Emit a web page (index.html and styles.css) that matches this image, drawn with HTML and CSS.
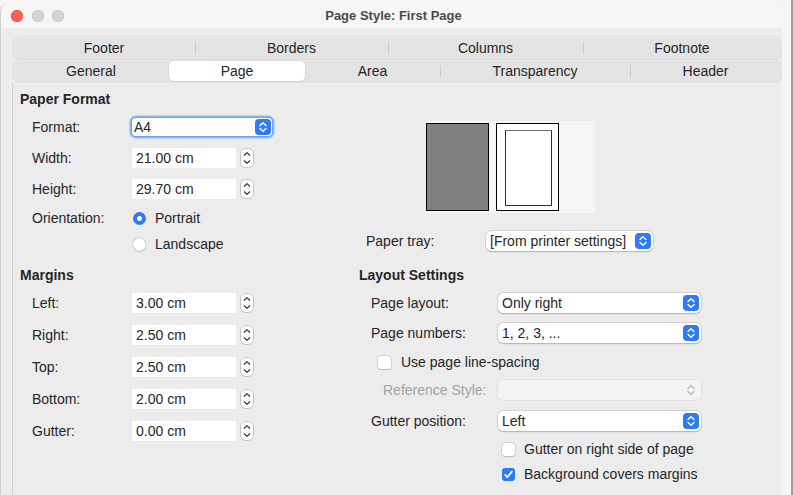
FILE: index.html
```html
<!DOCTYPE html>
<html>
<head>
<meta charset="utf-8">
<title>Page Style: First Page</title>
<link rel="stylesheet" href="styles.css">
</head>
<body>
<div class="window">
  <div class="titlebar">
    <div class="lights"><span class="light close"></span><span class="light"></span><span class="light"></span></div>
    <div class="title">Page Style: First Page</div>
    <div></div>
  </div>

  <div class="tabs">
    <div class="tabrow">
      <div class="tab w182">Footer</div>
      <div class="tab sep w193">Borders</div>
      <div class="tab sep w195">Columns</div>
      <div class="tab sep w198">Footnote</div>
    </div>
    <div class="tabrow">
      <div class="tab w156">General</div>
      <div class="tab active w136">Page</div>
      <div class="tab w135">Area</div>
      <div class="tab sep w190">Transparency</div>
      <div class="tab sep w151">Header</div>
    </div>
  </div>

  <div class="panel">
    <div class="col left">
      <div class="row head m6">Paper Format</div>
      <div class="row field h22 m7">
        <span class="lbl">Format:</span>
        <div class="select focus w140"><span>A4</span>
          <svg class="updown" width="16" height="16" viewBox="0 0 16 16"><rect x="0" y="0" width="16" height="16" rx="4" fill="#2d7cf6"/><path d="M5 6.5 L8 3.8 L11 6.5 M5 9.5 L8 12.2 L11 9.5" fill="none" stroke="#fff" stroke-width="1.5" stroke-linecap="round" stroke-linejoin="round"/></svg>
        </div>
      </div>
      <div class="row field m10"><span class="lbl">Width:</span><span class="num">21.00 cm</span>
        <svg class="spinner" width="14" height="20" viewBox="0 0 14 20"><rect x="0.5" y="0.5" width="13" height="19" rx="5" fill="#fff" stroke="#c4c4c4"/><path d="M4.3 7.2 L7 4.6 L9.7 7.2" fill="none" stroke="#333" stroke-width="1.2" stroke-linecap="round" stroke-linejoin="round"/><path d="M4.3 12.8 L7 15.4 L9.7 12.8" fill="none" stroke="#333" stroke-width="1.2" stroke-linecap="round" stroke-linejoin="round"/></svg>
      </div>
      <div class="row field m11"><span class="lbl">Height:</span><span class="num">29.70 cm</span>
        <svg class="spinner" width="14" height="20" viewBox="0 0 14 20"><rect x="0.5" y="0.5" width="13" height="19" rx="5" fill="#fff" stroke="#c4c4c4"/><path d="M4.3 7.2 L7 4.6 L9.7 7.2" fill="none" stroke="#333" stroke-width="1.2" stroke-linecap="round" stroke-linejoin="round"/><path d="M4.3 12.8 L7 15.4 L9.7 12.8" fill="none" stroke="#333" stroke-width="1.2" stroke-linecap="round" stroke-linejoin="round"/></svg>
      </div>
      <div class="row field m9"><span class="lbl">Orientation:</span><span class="radio on"></span><span class="opt">Portrait</span></div>
      <div class="row field m6"><span class="lbl"></span><span class="radio"></span><span class="opt">Landscape</span></div>

      <div class="row head m11">Margins</div>
      <div class="row field m8"><span class="lbl">Left:</span><span class="num">3.00 cm</span>
        <svg class="spinner" width="14" height="20" viewBox="0 0 14 20"><rect x="0.5" y="0.5" width="13" height="19" rx="5" fill="#fff" stroke="#c4c4c4"/><path d="M4.3 7.2 L7 4.6 L9.7 7.2" fill="none" stroke="#333" stroke-width="1.2" stroke-linecap="round" stroke-linejoin="round"/><path d="M4.3 12.8 L7 15.4 L9.7 12.8" fill="none" stroke="#333" stroke-width="1.2" stroke-linecap="round" stroke-linejoin="round"/></svg>
      </div>
      <div class="row field m12"><span class="lbl">Right:</span><span class="num">2.50 cm</span>
        <svg class="spinner" width="14" height="20" viewBox="0 0 14 20"><rect x="0.5" y="0.5" width="13" height="19" rx="5" fill="#fff" stroke="#c4c4c4"/><path d="M4.3 7.2 L7 4.6 L9.7 7.2" fill="none" stroke="#333" stroke-width="1.2" stroke-linecap="round" stroke-linejoin="round"/><path d="M4.3 12.8 L7 15.4 L9.7 12.8" fill="none" stroke="#333" stroke-width="1.2" stroke-linecap="round" stroke-linejoin="round"/></svg>
      </div>
      <div class="row field m12"><span class="lbl">Top:</span><span class="num">2.50 cm</span>
        <svg class="spinner" width="14" height="20" viewBox="0 0 14 20"><rect x="0.5" y="0.5" width="13" height="19" rx="5" fill="#fff" stroke="#c4c4c4"/><path d="M4.3 7.2 L7 4.6 L9.7 7.2" fill="none" stroke="#333" stroke-width="1.2" stroke-linecap="round" stroke-linejoin="round"/><path d="M4.3 12.8 L7 15.4 L9.7 12.8" fill="none" stroke="#333" stroke-width="1.2" stroke-linecap="round" stroke-linejoin="round"/></svg>
      </div>
      <div class="row field m12"><span class="lbl">Bottom:</span><span class="num">2.00 cm</span>
        <svg class="spinner" width="14" height="20" viewBox="0 0 14 20"><rect x="0.5" y="0.5" width="13" height="19" rx="5" fill="#fff" stroke="#c4c4c4"/><path d="M4.3 7.2 L7 4.6 L9.7 7.2" fill="none" stroke="#333" stroke-width="1.2" stroke-linecap="round" stroke-linejoin="round"/><path d="M4.3 12.8 L7 15.4 L9.7 12.8" fill="none" stroke="#333" stroke-width="1.2" stroke-linecap="round" stroke-linejoin="round"/></svg>
      </div>
      <div class="row field m12"><span class="lbl">Gutter:</span><span class="num">0.00 cm</span>
        <svg class="spinner" width="14" height="20" viewBox="0 0 14 20"><rect x="0.5" y="0.5" width="13" height="19" rx="5" fill="#fff" stroke="#c4c4c4"/><path d="M4.3 7.2 L7 4.6 L9.7 7.2" fill="none" stroke="#333" stroke-width="1.2" stroke-linecap="round" stroke-linejoin="round"/><path d="M4.3 12.8 L7 15.4 L9.7 12.8" fill="none" stroke="#333" stroke-width="1.2" stroke-linecap="round" stroke-linejoin="round"/></svg>
      </div>
    </div>

    <div class="col right">
      <div class="preview">
        <div class="sheet dark"></div>
        <div class="sheet page"><div class="inner"></div></div>
      </div>
      <div class="row h22 m17 p16"><span class="lbl l120">Paper tray:</span>
        <div class="select w167"><span>[From printer settings]</span>
          <svg class="updown" width="16" height="16" viewBox="0 0 16 16"><rect x="0" y="0" width="16" height="16" rx="4" fill="#2d7cf6"/><path d="M5 6.5 L8 3.8 L11 6.5 M5 9.5 L8 12.2 L11 9.5" fill="none" stroke="#fff" stroke-width="1.5" stroke-linecap="round" stroke-linejoin="round"/></svg>
        </div>
      </div>
      <div class="row head m13 p9">Layout Settings</div>
      <div class="row m8 p21"><span class="lbl l127">Page layout:</span>
        <div class="select w203"><span>Only right</span>
          <svg class="updown" width="16" height="16" viewBox="0 0 16 16"><rect x="0" y="0" width="16" height="16" rx="4" fill="#2d7cf6"/><path d="M5 6.5 L8 3.8 L11 6.5 M5 9.5 L8 12.2 L11 9.5" fill="none" stroke="#fff" stroke-width="1.5" stroke-linecap="round" stroke-linejoin="round"/></svg>
        </div>
      </div>
      <div class="row m10 p21"><span class="lbl l127">Page numbers:</span>
        <div class="select w203"><span>1, 2, 3, ...</span>
          <svg class="updown" width="16" height="16" viewBox="0 0 16 16"><rect x="0" y="0" width="16" height="16" rx="4" fill="#2d7cf6"/><path d="M5 6.5 L8 3.8 L11 6.5 M5 9.5 L8 12.2 L11 9.5" fill="none" stroke="#fff" stroke-width="1.5" stroke-linecap="round" stroke-linejoin="round"/></svg>
        </div>
      </div>
      <div class="row m9 p28"><span class="check"></span><span class="opt2">Use page line-spacing</span></div>
      <div class="row m8 p33"><span class="lbl l115 disabled">Reference Style:</span>
        <div class="select off w203"><span></span>
          <svg class="updown" width="16" height="16" viewBox="0 0 16 16"><path d="M5 6.5 L8 3.8 L11 6.5 M5 9.5 L8 12.2 L11 9.5" fill="none" stroke="#b4b4b4" stroke-width="1.3" stroke-linecap="round" stroke-linejoin="round"/></svg>
        </div>
      </div>
      <div class="row m11 p21"><span class="lbl l127">Gutter position:</span>
        <div class="select w203"><span>Left</span>
          <svg class="updown" width="16" height="16" viewBox="0 0 16 16"><rect x="0" y="0" width="16" height="16" rx="4" fill="#2d7cf6"/><path d="M5 6.5 L8 3.8 L11 6.5 M5 9.5 L8 12.2 L11 9.5" fill="none" stroke="#fff" stroke-width="1.5" stroke-linecap="round" stroke-linejoin="round"/></svg>
        </div>
      </div>
      <div class="row m8 p152"><span class="check"></span><span class="opt3">Gutter on right side of page</span></div>
      <div class="row m5 p152"><span class="check on"><svg width="13" height="13" viewBox="0 0 13 13"><path d="M3.2 6.8 L5.4 9.2 L9.8 3.6" fill="none" stroke="#fff" stroke-width="1.8" stroke-linecap="round" stroke-linejoin="round"/></svg></span><span class="opt3">Background covers margins</span></div>
    </div>
  </div>
</div>
</body>
</html>
```

FILE: styles.css
```css
html, body {
  margin: 0;
  padding: 0;
  width: 793px;
  height: 495px;
  overflow: hidden;
}
body {
  background: linear-gradient(to right, #f5f5f5 0, #f5f5f5 791px, #9c9c9c 791px);
  font-family: "Liberation Sans", Arial, sans-serif;
  font-size: 14px;
  color: #262626;
}
.window {
  position: absolute;
  left: 0;
  top: 2px;
  width: 782px;
  height: 493px;
  background: #ececec;
  border-radius: 10px 10px 0 0;
  border-left: 1px solid #cdcdcd;
  box-sizing: border-box;
  overflow: hidden;
}
.titlebar {
  height: 26px;
  display: grid;
  grid-template-columns: 1fr auto 1fr;
  align-items: center;
  padding-left: 10px;
  background: #f6f6f6;
}
.lights {
  display: flex;
  gap: 8.5px;
  padding-left: 0;
  margin-top: 1px;
}
.light {
  width: 12px;
  height: 12px;
  border-radius: 50%;
  background: #d3d3d3;
  box-shadow: inset 0 0 0 0.5px #bcbcbc;
}
.light.close {
  background: #fe5f57;
  box-shadow: inset 0 0 0 0.5px #e2463f;
}
.title {
  font-size: 13px;
  font-weight: bold;
  color: #4b4b4b;
  margin-left: -6px;
}
.tabs {
  padding: 9px 0 0 12px;
  background: #ececec;
}
.tabrow {
  display: flex;
  height: 22px;
  background: #e3e3e3;
  border-radius: 6px;
  box-shadow: inset 0 0.5px 0 #f2f2f2, 0 0 0 0.5px #d6d6d6;
  margin-bottom: 1px;
}
.tab {
  position: relative;
  display: flex;
  align-items: center;
  justify-content: center;
  height: 22px;
  color: #262626;
}
.tab.sep::before {
  content: "";
  position: absolute;
  left: 0;
  top: 5px;
  height: 12px;
  border-left: 1px solid #cacaca;
}
.tab.active {
  background: #ffffff;
  border-radius: 5px;
  height: 20px;
  margin-top: 1px;
  box-shadow: 0 0 0 0.5px #d0d0d0, 0 1px 1px rgba(0,0,0,0.08);
}
.w182 { width: 182px; }
.w193 { width: 193px; }
.w195 { width: 195px; }
.w198 { width: 198px; }
.w156 { width: 156px; }
.w136 { width: 136px; }
.w135 { width: 135px; }
.w190 { width: 190px; }
.w151 { width: 151px; }

.panel {
  display: grid;
  grid-template-columns: 337px 1fr;
  margin-left: 11px;
  border-left: 1px solid #d2d2d2;
  height: 420px;
  background: #ececec;
}
.col.left {
  padding-left: 7px;
}
.row {
  display: flex;
  align-items: center;
  height: 20px;
  white-space: nowrap;
}
.h22 { height: 22px; }
.head {
  font-weight: bold;
}
.field {
  padding-left: 12px;
}
.lbl {
  display: inline-block;
  width: 100px;
  flex: none;
}
.l115 { width: 115px; }
.l120 { width: 120px; }
.l127 { width: 127px; }
.disabled { color: #a3a3a3; }

.m5 { margin-top: 5px; }
.m6 { margin-top: 6px; }
.m7 { margin-top: 7px; }
.m8 { margin-top: 8px; }
.m9 { margin-top: 9px; }
.m10 { margin-top: 10px; }
.m11 { margin-top: 11px; }
.m12 { margin-top: 12px; }
.m13 { margin-top: 13px; }
.m17 { margin-top: 17px; }
.p9 { padding-left: 9px; }
.p16 { padding-left: 16px; }
.p21 { padding-left: 21px; }
.p28 { padding-left: 28px; }
.p33 { padding-left: 33px; }
.p152 { padding-left: 152px; }

.num {
  display: flex;
  align-items: center;
  width: 104px;
  height: 20px;
  background: #fff;
  padding-left: 4px;
  box-sizing: border-box;
}
.spinner {
  margin-left: 4px;
  flex: none;
}
.select {
  display: flex;
  align-items: center;
  justify-content: space-between;
  height: 20px;
  background: #fff;
  border-radius: 5px;
  box-shadow: 0 0 0 0.5px rgba(0,0,0,0.16), 0 0.5px 1.5px rgba(0,0,0,0.18);
  padding: 0 2px 0 4px;
  box-sizing: border-box;
  flex: none;
}
.select.focus {
  height: 18px;
  padding-left: 2px;
  padding-right: 1px;
  border-radius: 4px;
  box-shadow: 0 0 0 1px #6aa3ef, 0 0 0 2.5px rgba(70,140,240,0.55);
}
.select.off {
  background: #f4f4f4;
  box-shadow: 0 0 0 0.5px rgba(0,0,0,0.08);
}
.w140 { width: 140px; }
.w167 { width: 167px; }
.w203 { width: 203px; }
.updown { flex: none; }

.radio {
  width: 13px;
  height: 13px;
  border-radius: 50%;
  background: #fff;
  box-shadow: 0 0 0 0.5px rgba(0,0,0,0.2), 0 0.5px 1px rgba(0,0,0,0.15);
  margin-left: 1px;
  flex: none;
  position: relative;
}
.radio.on {
  background: #2d7cf6;
  box-shadow: none;
}
.radio.on::after {
  content: "";
  position: absolute;
  left: 4px;
  top: 4px;
  width: 5px;
  height: 5px;
  border-radius: 50%;
  background: #fff;
}
.opt { margin-left: 9px; }
.opt2 { margin-left: 10px; }
.opt3 { margin-left: 9px; }
.check {
  width: 13px;
  height: 13px;
  border-radius: 3px;
  background: #fff;
  box-shadow: 0 0 0 0.5px rgba(0,0,0,0.2), 0 0.5px 1px rgba(0,0,0,0.12);
  flex: none;
  display: flex;
}
.check.on {
  background: #2d7cf6;
  box-shadow: none;
}

.preview {
  display: flex;
  margin: 38px 0 0 76px;
  width: 169px;
  height: 92px;
  background: #f6f6f6;
  align-items: flex-start;
}
.sheet {
  width: 63px;
  height: 88px;
  margin-top: 2px;
  box-sizing: border-box;
  border: 1.5px solid #000;
}
.sheet.dark {
  background: #808080;
}
.sheet.page {
  background: #fff;
  margin-left: 7px;
  padding: 5.5px 0 0 7.5px;
}
.inner {
  width: 47px;
  height: 76px;
  box-sizing: border-box;
  border: 1px solid #2e2e2e;
  border-top-color: #6e6e6e;
}
```
